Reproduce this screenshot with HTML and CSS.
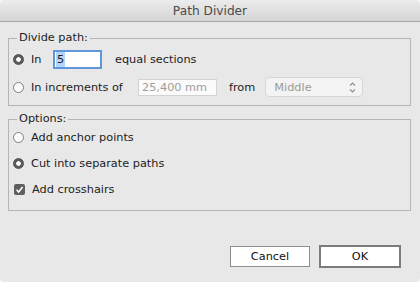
FILE: index.html
```html
<!DOCTYPE html>
<html lang="en">
<head>
    <meta charset="UTF-8">
    <meta name="viewport" content="width=device-width, initial-scale=1.0">
    <title>Path Divider</title>
    <link rel="stylesheet" href="styles.css">
</head>
<body>
    <div class="window">
        <!-- Barra de título -->
        <div class="titlebar">Path Divider</div>

        <div class="content">
            <!-- Grupo: dividir caminho -->
            <fieldset class="group group-divide">
                <legend>Divide path:</legend>
                <div class="row row-in">
                    <span class="radio on"></span>
                    <span class="label label-in">In</span>
                    <div class="field field-focus"><span class="sel">5</span></div>
                    <span class="label label-equal">equal sections</span>
                </div>
                <div class="row row-inc">
                    <span class="radio"></span>
                    <span class="label label-inc">In increments of</span>
                    <div class="field field-off">25,400 mm</div>
                    <span class="label label-from">from</span>
                    <div class="select">
                        <span>Middle</span>
                        <svg class="arrows" width="7" height="13" viewBox="0 0 7 13">
                            <path d="M1 4.5 L3.5 2 L6 4.5" fill="none" stroke="#8e8e8e" stroke-width="1.1"/>
                            <path d="M1 8.5 L3.5 11 L6 8.5" fill="none" stroke="#8e8e8e" stroke-width="1.1"/>
                        </svg>
                    </div>
                </div>
            </fieldset>

            <!-- Grupo: opções -->
            <fieldset class="group group-options">
                <legend>Options:</legend>
                <div class="row">
                    <span class="radio"></span>
                    <span class="label">Add anchor points</span>
                </div>
                <div class="row">
                    <span class="radio on"></span>
                    <span class="label">Cut into separate paths</span>
                </div>
                <div class="row">
                    <span class="check">
                        <svg width="11" height="11" viewBox="0 0 11 11">
                            <path d="M2.5 5.8 L4.6 8 L8.6 3" fill="none" stroke="#fff" stroke-width="1.6"/>
                        </svg>
                    </span>
                    <span class="label">Add crosshairs</span>
                </div>
            </fieldset>

            <!-- Botões -->
            <div class="buttons">
                <button class="btn">Cancel</button>
                <button class="btn btn-default">OK</button>
            </div>
        </div>
    </div>
</body>
</html>
```

FILE: styles.css
```css
body {
    margin: 0;
    background-color: #f6f6f6;
    font-family: "DejaVu Sans", Verdana, sans-serif;
    font-size: 11.3px;
    color: #1c1c1c;
}
.window {
    width: 420px;
    height: 282px;
    display: flex;
    flex-direction: column;
    background-color: #e8e8e8;
    border-radius: 5px;
    overflow: hidden;
}
.titlebar {
    height: 21px;
    line-height: 22px;
    text-align: center;
    font-size: 12.2px;
    color: #4b4b4b;
    background: linear-gradient(#ececec, #d4d4d4);
    border-bottom: 1px solid #a9a9a9;
}
.content {
    flex: 1;
    display: flex;
    flex-direction: column;
    padding: 0 9px 14px 8px;
}
.group {
    margin: 0;
    padding: 0 0 7px 0;
    border: 1px solid #b5b5b5;
    min-width: 0;
}
.group legend {
    margin-left: 8px;
    padding: 0 2px;
    line-height: 14px;
}
.group-divide {
    margin-top: 9px;
}
.group-options {
    margin-top: 6px;
    padding-bottom: 11px;
}
.row {
    display: flex;
    align-items: center;
    height: 20px;
    margin-top: 6px;
}
.group-options .row:first-of-type {
    margin-top: 1px;
}
.row-in {
    height: 22px;
    margin-top: 3px;
}
.row-inc {
    height: 22px;
}
.radio, .check {
    width: 11px;
    height: 11px;
    box-sizing: border-box;
    margin: 0 7px 0 4px;
    flex: none;
}
.radio {
    border-radius: 50%;
    border: 1px solid #7d7d7d;
    background-color: #fcfcfc;
}
.radio.on {
    border-color: #505050;
    background: radial-gradient(circle, #fff 0 2px, #5a5a5a 2.6px);
}
.check {
    margin-left: 5px;
    border-radius: 2px;
    background-color: #5f5f5f;
}
.check svg {
    display: block;
}
.label-in {
    width: 22px;
}
.label-equal {
    margin-left: 13px;
}
.label-inc {
    width: 107px;
}
.label-from {
    margin-left: 12px;
    margin-right: 10px;
}
.field {
    box-sizing: border-box;
    background-color: #fff;
    display: flex;
    align-items: center;
}
.field-focus {
    width: 49px;
    height: 19px;
    border: 2px solid #5e98d8;
    padding-left: 1px;
}
.sel {
    background-color: #b3d4fd;
    padding: 1px 1px;
    line-height: 13px;
}
.field-off {
    width: 79px;
    height: 17px;
    border: 1px solid #d2d2d2;
    background-color: #fbfbfb;
    color: #9d9d9d;
    padding-left: 3px;
}
.select {
    box-sizing: border-box;
    width: 98px;
    height: 20px;
    display: flex;
    align-items: center;
    justify-content: space-between;
    padding: 0 6px 0 8px;
    border: 1px solid #d6d6d6;
    border-radius: 4px;
    background-color: #f3f3f3;
    color: #9b9b9b;
}
.arrows {
    display: block;
}
.buttons {
    margin-top: auto;
    display: flex;
    justify-content: flex-end;
    align-items: center;
    gap: 9px;
    padding-right: 10px;
}
.btn {
    box-sizing: border-box;
    width: 80px;
    height: 21px;
    padding: 0;
    font-family: inherit;
    font-size: 11.3px;
    color: #111;
    background-color: #fff;
    border: 1px solid #8e8e8e;
    border-radius: 0;
}
.btn-default {
    width: 82px;
    height: 23px;
    border: 2px solid #7c7c7c;
}
```
